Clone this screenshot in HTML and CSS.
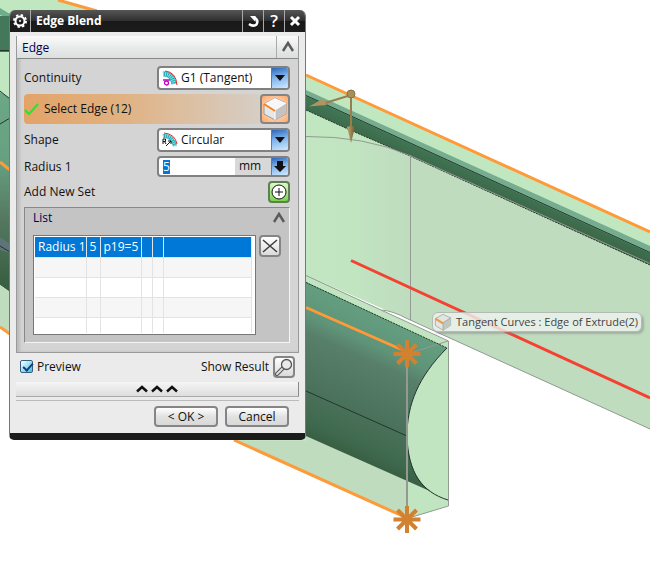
FILE: index.html
```html
<!DOCTYPE html>
<html lang="en">
<head>
<meta charset="utf-8">
<title>Edge Blend</title>
<link rel="stylesheet" href="styles.css">
</head>
<body>
<main class="viewport">
  <svg class="scene" viewBox="0 0 650 582" aria-hidden="true">
    <defs>
      <linearGradient id="wall" gradientUnits="userSpaceOnUse" x1="306" y1="0" x2="410" y2="0"><stop offset="0" stop-color="#c1e7c1"/><stop offset=".4" stop-color="#c1e5c1"/><stop offset="1" stop-color="#bfdcbf"/></linearGradient>
      <linearGradient id="groove" gradientUnits="userSpaceOnUse" x1="356" y1="303" x2="291" y2="446">
        <stop offset="0" stop-color="#649f80"/><stop offset=".2" stop-color="#5f9479"/><stop offset=".3" stop-color="#587f69"/><stop offset=".58" stop-color="#4c735d"/><stop offset=".8" stop-color="#406a4f"/><stop offset="1" stop-color="#315437"/>
      </linearGradient>
      <linearGradient id="slot" gradientUnits="userSpaceOnUse" x1="480" y1="172" x2="474" y2="186"><stop offset="0" stop-color="#407655"/><stop offset="1" stop-color="#3c6848"/></linearGradient>
      <linearGradient id="leftFace" x2="0" y2="1"><stop offset="0" stop-color="#6ba886"/><stop offset=".35" stop-color="#66a080"/><stop offset=".65" stop-color="#54765f"/><stop offset="1" stop-color="#355d3e"/></linearGradient>
      <linearGradient id="bronze"><stop offset="0" stop-color="#c5aa73"/><stop offset="1" stop-color="#6f5931"/></linearGradient>
    </defs>
    <path d="M0 0H58L97 10H306V75L650 232V429L408 319 386 310 306 275H0Z" fill="#c1e7c1"/>
    <path d="M97 10H306V75Z" fill="#fff"/>
    <path d="M306 136Q365 136 410 155L650 265V429L408 319 386 310 306 275Z" fill="url(#wall)"/>
    <path d="M306 90 650 246V253L306 96Z" fill="#76ad8e"/>
    <path d="M306 96 650 253V265L410 156 350 130 306 110Z" fill="url(#slot)"/>
    <path d="M306 95.500 650 252.500" class="ink"/>
    <path d="M306 110 350 130 410 156 650 265" class="ink dotted"/>
    <path d="M306 136.500Q365 136 410 155.500L650 263.500M410.500 155V320" class="edge"/>
    <path d="M58 0 97 11M306 75 650 232" class="pick"/>
    <path d="M306 275 448 341V506L407 519 234 441Z" fill="#c1e5c1"/>
    <path d="M306 436 407 481V519L234 441H306Z" fill="#bfdcbf"/>
    <path d="M306 282 447 348C418 377 407 405 407 436 408 465 418 484 432 492L306 436Z" fill="url(#groove)"/>
    <path d="M382 310Q393 311 408 319L448 337V341Z" fill="#fff"/>
    <path d="M306 275.500 448.500 341V506L407 518.500M382 310Q393 311 408 319L650 429M407.500 354 448 341" class="edge"/>
    <path d="M306 282.500 447 348" class="ink dotted"/>
    <path d="M447 348C418 377 407 405 407 436 408 473 422 492 448 500M306 391 407 436" class="ink"/>
    <path d="M407 354V518" class="edge strong"/>
    <path d="M306 307.500 407 352M234 440 407 518" class="pick"/>
    <g class="star">
      <path d="M407 340V367M393.500 354H420.500M397.500 344.500 416.500 363.500M416.500 344.500 397.500 363.500"/>
      <path d="M407 506V533M393.500 519.500H420.500M397.500 510 416.500 529M416.500 510 397.500 529"/>
    </g>
    <path d="M351 260.500 650 398" class="preview-line"/>
    <g stroke="#977e4c" stroke-width="2">
      <path d="M351 95 322 104M351 95V129"/>
      <path d="M309 106.500 323.500 98.500 326.500 105Z" fill="#af955f" stroke="none"/>
      <path d="M347 127Q351 125 355 127L351 143Z" fill="url(#bronze)" stroke="none"/>
      <circle cx="351" cy="94" r="4" fill="#a78e5d" stroke="#89704a" stroke-width="1"/>
    </g>
    <g>
      <path d="M0 8 10 14V19L0 15Z" fill="#6fae8b"/>
      <path d="M0 16H10V52H0Z" fill="#43795a"/>
      <path d="M0 52H10V96L0 92Z" fill="#c1e7c1"/>
      <path d="M0 92 10 98V292L0 285Z" fill="url(#leftFace)"/>
      <path d="M0 237 10 244V253L0 250Z" fill="#5e7478"/>
      <path d="M0 285 10 292V336L0 328Z" fill="#bfdcbf"/>
      <path d="M0 336V328L10 336V380H0Z" fill="#fff"/>
      <path d="M0 50.500H10M0 91 10 99M0 124 10 118M0 246 10 252" class="ink"/>
      <path d="M0 162 10 170M0 327 10 334" class="pick"/>
    </g>
  </svg>

  <form class="dialog" aria-label="Edge Blend">
    <header class="titlebar">
      <button type="button" class="tool tool-first" aria-label="Options"><svg width="16" height="16" viewBox="0 0 16 16"><circle cx="8" cy="8" r="4.500" fill="none" stroke="#fff" stroke-width="2"/><circle cx="8" cy="8" r="6" fill="none" stroke="#fff" stroke-width="2" stroke-dasharray="2.360 2.350"/><circle cx="8" cy="8" r="1" fill="#fff"/></svg></button>
      <h1>Edge Blend</h1>
      <button type="button" class="tool" aria-label="Reset"><svg width="14" height="14" viewBox="0 0 14 14"><path d="M3 10Q7 13 10.500 10.500 13 6 8.500 3.500" fill="none" stroke="#fff" stroke-width="2.500"/><path d="M4 2H9.500V8Z" fill="#fff"/></svg></button>
      <button type="button" class="tool help" aria-label="Help">?</button>
      <button type="button" class="tool" aria-label="Close"><svg width="12" height="12" viewBox="0 0 12 12"><path d="M2 2 10 10M10 2 2 10" stroke="#fff" stroke-width="3"/></svg></button>
    </header>

    <section class="panel">
      <header class="panel-head">
        <h2>Edge</h2>
        <button type="button" class="collapse" aria-label="Collapse Edge"><svg width="14" height="12" viewBox="0 0 14 12"><path d="M2 10 7 2 12 10" fill="none" stroke="#5c5c5c" stroke-width="2.500"/></svg></button>
      </header>
      <div class="fields">
        <div class="row">
          <label for="continuity">Continuity</label>
          <div class="combo">
            <svg width="16" height="16" viewBox="0 0 16 16"><path d="M1 4Q10 3 12 14" fill="none" stroke="#22a9b5" stroke-width="5"/><path d="M1 4Q10 3 12 14" fill="none" stroke="#83e4e6" stroke-width="4" stroke-dasharray="1 1"/><path d="M3 1Q14 2 15 15" fill="none" stroke="#e02828" stroke-width="1"/><path d="M1 10H8" stroke="#c800c8" stroke-width="1.500"/><circle cx="4.500" cy="13" r="2" fill="#fff" stroke="#c800c8" stroke-width="1.300"/></svg>
            <select id="continuity"><option>G1 (Tangent)</option><option>G2 (Curvature)</option></select>
            <span class="drop"><svg width="12" height="8" viewBox="0 0 12 8"><path d="M1 1H11L6 7Z" fill="#111"/></svg></span>
          </div>
        </div>
        <div class="row selection">
          <svg width="16" height="16" viewBox="0 0 16 16"><path d="M1 9 5 13 14 3" fill="none" stroke="#2de22d" stroke-width="2"/></svg>
          <span class="grow">Select Edge (12)</span>
          <button type="button" class="square edge-button" aria-label="Select Edge"><svg width="26" height="26" viewBox="0 0 26 26"><path d="M13 2 24 7V18L13 24 2 18V8Z" fill="#e7e7e7" stroke="#999"/><path d="M2 8 13 2 24 7 13 14Z" fill="#f7f7f7"/><path d="M13 14 24 7V18L13 24Z" fill="#c3c3c3"/><path d="M13 14V24M13 14 24 7" stroke="#fff"/><path d="M2 8 13 15" stroke="#f58220" stroke-width="2"/></svg></button>
        </div>
        <div class="row">
          <label for="shape">Shape</label>
          <div class="combo">
            <svg width="16" height="16" viewBox="0 0 16 16"><path d="M1 4Q10 3 13 14" fill="none" stroke="#22a9b5" stroke-width="4"/><path d="M1 4Q10 3 13 14" fill="none" stroke="#83e4e6" stroke-width="3" stroke-dasharray="1 1"/><path d="M2 1Q13 2 15 12" fill="none" stroke="#e02828"/><path d="M1 12V7H3.500V9.500H1M2.500 9.500 4 12M4 14 9 9M6 9H9V12" fill="none" stroke="#111"/></svg>
            <select id="shape"><option>Circular</option><option>Conic</option></select>
            <span class="drop"><svg width="12" height="8" viewBox="0 0 12 8"><path d="M1 1H11L6 7Z" fill="#111"/></svg></span>
          </div>
        </div>
        <div class="row">
          <label for="radius">Radius 1</label>
          <div class="combo numeric">
            <input id="radius" type="text" value="5">
            <span class="unit">mm</span>
            <button type="button" class="drop" aria-label="Radius options"><svg width="12" height="13" viewBox="0 0 12 13"><path d="M3 1H9V6H12L6 12 0 6H3Z" fill="#111"/></svg></button>
          </div>
        </div>
        <div class="row">
          <span class="grow">Add New Set</span>
          <button type="button" class="square add" aria-label="Add New Set"><svg width="16" height="16" viewBox="0 0 16 16"><circle cx="8" cy="8" r="7" fill="#fff" stroke="#111"/><path d="M8 4V12M4 8H12" stroke="#111"/></svg></button>
        </div>
        <section class="list">
          <header><h2>List</h2><button type="button" class="collapse-list" aria-label="Collapse List"><svg width="14" height="12" viewBox="0 0 14 12"><path d="M2 10 7 2 12 10" fill="none" stroke="#5c5c5c" stroke-width="2.500"/></svg></button></header>
          <div class="list-body">
            <div class="grid-frame">
              <table>
                <colgroup><col class="c-name"><col class="c-num"><col class="c-expr"><col class="c-slim"><col class="c-slim"><col></colgroup>
                <tbody>
                  <tr class="selected"><td>Radius 1</td><td>5</td><td>p19=5</td><td></td><td></td><td></td></tr>
                  <tr><td></td><td></td><td></td><td></td><td></td><td></td></tr>
                  <tr><td></td><td></td><td></td><td></td><td></td><td></td></tr>
                  <tr><td></td><td></td><td></td><td></td><td></td><td></td></tr>
                  <tr class="cut"><td></td><td></td><td></td><td></td><td></td><td></td></tr>
                </tbody>
              </table>
            </div>
            <button type="button" class="square" aria-label="Remove"><svg width="16" height="16" viewBox="0 0 16 16"><path d="M1 2 15 14M15 2 1 14" stroke="#3d3d3d" stroke-width="1.500"/></svg></button>
          </div>
        </section>
      </div>
    </section>

    <div class="preview">
      <input type="checkbox" id="preview" checked>
      <label for="preview" class="grow">Preview</label>
      <label for="result">Show Result</label>
      <button type="button" id="result" class="square" aria-label="Show Result"><svg width="18" height="18" viewBox="0 0 18 18"><path d="M8 10 2 16" stroke="#555" stroke-width="4" stroke-linecap="round"/><path d="M8 10 2 16" stroke="#ddd" stroke-width="2" stroke-linecap="round"/><circle cx="11.500" cy="6.500" r="5" fill="#e8e8e8" stroke="#555" stroke-width="1.300"/></svg></button>
    </div>
    <button type="button" class="fold" aria-label="Show less"><svg width="42" height="8" viewBox="0 0 42 8"><path d="M1 6.500 6 2 11 6.500M16 6.500 21 2 26 6.500M31 6.500 36 2 41 6.500" fill="none" stroke="#111" stroke-width="2.500"/></svg></button>
    <footer class="actions">
      <button type="submit">&lt; OK &gt;</button>
      <button type="button">Cancel</button>
    </footer>
  </form>

  <div class="tooltip" role="tooltip">
    <svg width="18" height="18" viewBox="0 0 26 26"><path d="M13 2 24 7V18L13 25 2 18V8Z" fill="#e2e6e1" stroke="#999"/><path d="M13 14 24 7V18L13 25Z" fill="#c0c6c0"/><path d="M13 14V25M13 14 24 7" stroke="#999"/><path d="M2 8 13 15" stroke="#e99a48" stroke-width="3"/></svg>
    <span>Tangent Curves : Edge of Extrude(2)</span>
  </div>
</main>
</body>
</html>
```
FILE: styles.css
```css
* { box-sizing: border-box; }
body { margin: 0; background: #fff; color: #111; font: 12px/16px "Open Sans", "Noto Sans", sans-serif; }
button, input, select { font: inherit; color: inherit; margin: 0; padding: 0; }
button { display: flex; align-items: center; justify-content: center; flex: none; }
svg { display: block; flex: none; }
h1, h2 { margin: 0; font-size: 12px; line-height: 16px; flex: 1; }

.viewport { position: relative; min-height: 100vh; overflow: hidden; }
.scene { width: 100%; height: auto; }
.ink { fill: none; stroke: #24352c; stroke-width: 1; }
.dotted { stroke-dasharray: 2 1; }
.edge { fill: none; stroke: #929a92; stroke-width: 1; }
.strong { stroke-width: 2; }
.pick { fill: none; stroke: #ff9a38; stroke-width: 3; }
.preview-line { stroke: #f54132; stroke-width: 3; }
.star { stroke: #d1812f; stroke-width: 4; }

.dialog {
  position: absolute; left: 9px; top: 10px; width: 297px;
  display: flex; flex-direction: column;
  background: #ebebeb; border: solid #777; border-width: 0 1px;
  border-radius: 6px 6px 5px 5px; overflow: hidden;
  border-bottom: 7px solid #1c1c1c;
}
.titlebar { display: flex; height: 22px; background: linear-gradient(#555, #303030 48%, #191919 52%, #1c1c1c); color: #fff; }
.titlebar h1 { padding: 3px 5px; }
.tool { width: 21px; border: 0; border-left: 1px solid #aaa; background: none; }
.tool-first { border-left: 0; border-right: 1px solid #aaa; }
.help { font-size: 17px; font-weight: 600; }

.panel { margin: 4px 6px 0; background: #d4d4d4; border: 1px solid #999; border-top: 0; box-shadow: inset 3px 0 3px #bbb; }
.panel-head { display: flex; height: 23px; border-bottom: 1px solid #888; background: linear-gradient(#fafafa, #e8eaea 55%, #dcdfdf); }
h2 { font-weight: 400; color: #000055; padding: 4px 5px; }
.collapse { width: 22px; border: 0; border-left: 1px solid #aaa; background: none; }
.fields { display: flex; flex-direction: column; gap: 4px; padding: 7px 8px 9px 7px; }
.row { display: flex; align-items: center; justify-content: space-between; }
.grow { flex: 1; }
.combo { display: flex; align-items: center; width: 133px; height: 24px; background: #fff; border: 2px solid #808080; border-radius: 4px; overflow: hidden; padding-left: 3px; }
.combo select { appearance: none; flex: 1; min-width: 0; border: 0; background: none; padding-left: 3px; height: 20px; outline: 0; }
.drop { display: flex; align-items: center; justify-content: center; width: 16px; align-self: stretch; border: 0; background: linear-gradient(165deg, #2c64b8, #7fb4ec 45%, #cfe9ff); pointer-events: none; box-shadow: -1px 0 #777; }
.numeric { height: 21px; padding-left: 4px; }
.numeric input { border: 0; outline: 0; flex: 1; min-width: 0; height: 14px; color: #fff; background: linear-gradient(90deg, #0078d7 7px, #fff 7px); }
.unit { width: 37px; align-self: stretch; padding-left: 4px; background: #d8d8d8; }
.selection { height: 30px; border-radius: 4px; background: linear-gradient(90deg, #e3a368, #e1b180 35%, #d4d4d4); gap: 4px; }
.square { width: 22px; height: 22px; border: 2px solid #858585; border-radius: 4px; background: linear-gradient(#fff, #dadada); }
.edge-button { width: 30px; height: 30px; background: radial-gradient(#fff2e6, #ffa868); }
.add { background: linear-gradient(#dff7cd, #79d44c); border-color: #5d8050; }

.list { background: #c4c4c4; border: 1px solid #888; border-right-color: #f5f5f5; border-bottom-color: #f5f5f5; padding-bottom: 7px; }
.list header { display: flex; height: 27px; }
.list h2 { padding: 2px 8px; }
.collapse-list { width: 20px; height: 20px; border: 0; background: none; }
.list-body { display: flex; gap: 3px; padding: 0 8px; }
.grid-frame { flex: 1; border: 1px solid #777; background: #fff; padding: 1px 3px 1px 1px; }
table { width: 100%; table-layout: fixed; border-collapse: collapse; }
td { height: 20px; padding: 0 0 0 3px; border-right: 1px solid #e3e3e3; border-bottom: 1px solid #e3e3e3; white-space: nowrap; line-height: 16px; }
.cut td { height: 16px; border-bottom: 0; }
tr:nth-child(even) { background: #f6f6f6; }
.selected { background: #0078d7; color: #fff; }
.c-name { width: 51px; }
.c-num { width: 14px; }
.c-expr { width: 41px; }
.c-slim { width: 11px; }

.preview { display: flex; align-items: center; gap: 4px; height: 27px; padding: 0 10px; }
.preview input { appearance: none; width: 13px; height: 13px; border: 1px solid #355f80; border-radius: 2px; background: linear-gradient(135deg, #fff, #42bdea); position: relative; }
.preview input:checked::after { content: ""; position: absolute; left: 4px; top: 0; width: 4px; height: 8px; border: solid #114078; border-width: 0 2px 2px 0; transform: rotate(42deg); }
.fold { height: 15px; margin: 2px 6px 3px; border: 0; border-right: 1px solid #888; border-bottom: 1px solid #aaa; background: linear-gradient(#f5f5f5, #dedede); }
.actions { display: flex; justify-content: flex-end; gap: 7px; margin: 0 6px; padding: 5px 10px 6px; border-top: 1px solid #bbb; }
.actions button { width: 64px; height: 21px; border: 2px solid #858585; border-radius: 4px; background: linear-gradient(#fff, #e2e2e2 50%, #d8d8d8); }

.tooltip { position: absolute; left: 432px; top: 312px; display: flex; align-items: center; gap: 4px; height: 20px; padding: 0 3px 0 1px; border: 1px solid #b4bbb4; border-radius: 6px; background: rgba(240, 244, 240, .8); box-shadow: 2px 2px 2px #8888; color: #444; font-size: 11px; white-space: nowrap; }
```
